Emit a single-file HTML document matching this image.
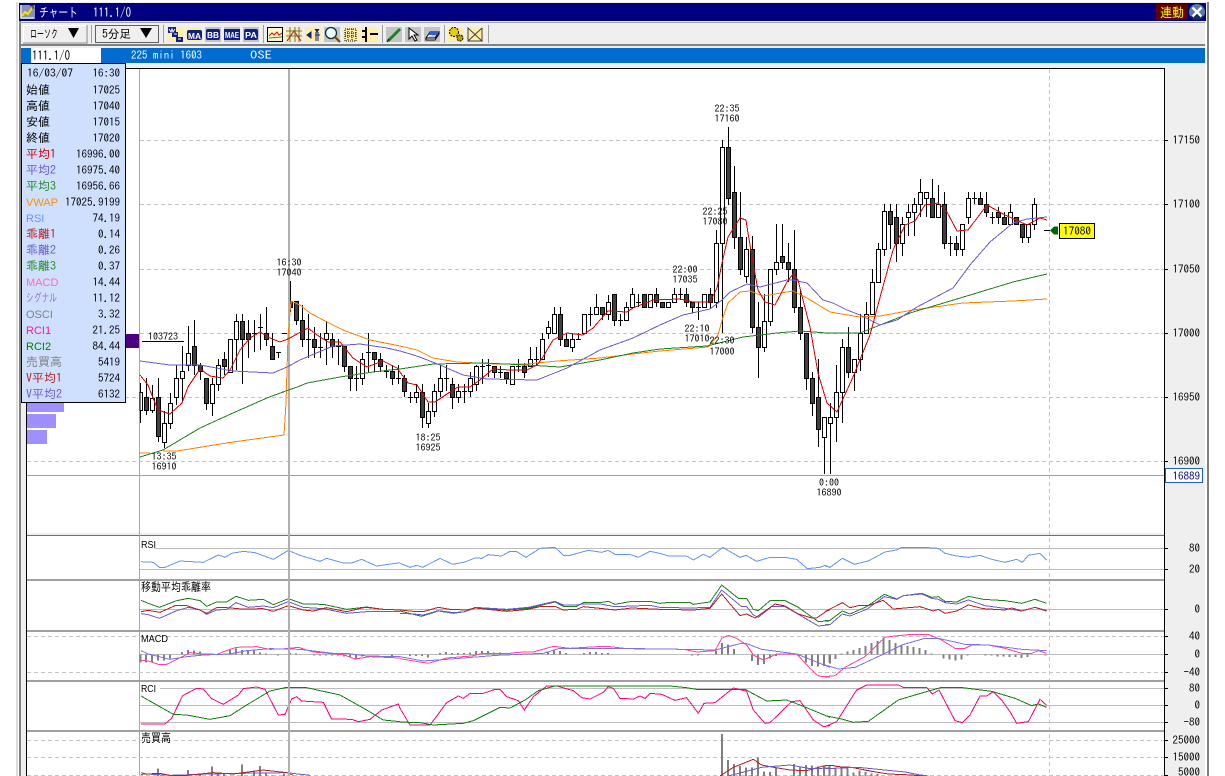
<!DOCTYPE html>
<html lang="ja"><head><meta charset="utf-8"><title>チャート</title>
<style>
html,body{margin:0;padding:0;background:#fff;width:1225px;height:776px;overflow:hidden}
svg{display:block;position:absolute;left:0;top:0}
text{font-family:"IPAGothic","Noto Sans CJK JP",monospace;font-size:11px;fill:#000;white-space:pre}
.j{font-size:12px}
.l{font-family:"Liberation Sans","IPAGothic",sans-serif;font-size:11px}
.e{text-anchor:end}
.m{text-anchor:middle;font-size:10px}
.a{text-anchor:end;font-size:11px}
.z{fill:none;shape-rendering:crispEdges}
</style></head><body>
<svg width="1225" height="776" viewBox="0 0 1225 776" xmlns="http://www.w3.org/2000/svg">
<!-- window chrome -->
<rect x="16" y="0" width="1193" height="776" fill="#efefef"/>
<rect x="0" y="0" width="1225" height="2" fill="#fff"/>
<rect x="16" y="2" width="2" height="774" fill="#ddd"/>
<rect x="18" y="2" width="1" height="774" fill="#fff"/>
<rect x="19" y="21" width="2" height="755" fill="#808080"/>
<rect x="1207" y="2" width="2" height="774" fill="#808080"/>
<rect x="1205" y="21" width="2" height="755" fill="#fff"/>
<rect x="19" y="3" width="1187" height="18" fill="#000080"/>
<!-- title icon -->
<rect x="20" y="5" width="15" height="14" fill="#8890b8"/>
<path d="M21 18h13M21 5v13" stroke="#fff" fill="none"/>
<path d="M22 16l3-4 3 2 4-6" stroke="#ffe000" stroke-width="2" fill="none"/>
<path d="M30 6l3-1v4" stroke="#202020" fill="none"/>
<text x="39" y="17" style="fill:#fff;font-size:13px" textLength="39" lengthAdjust="spacingAndGlyphs">チャート</text>
<text x="93" y="17" style="fill:#fff;font-size:13px" textLength="38" lengthAdjust="spacingAndGlyphs">111.1/O</text>
<rect x="1156" y="4" width="32" height="16" fill="#600000"/>
<text x="1160" y="17" style="fill:#ff0;font-size:13px" textLength="24" lengthAdjust="spacingAndGlyphs">連動</text>
<circle cx="1197" cy="12" r="8" fill="#5a7aa8"/><path d="M1197 12a8 8 0 0 1-7 4 8 8 0 0 0 14 0z" fill="#103060"/>
<path d="M1192.500 7.500l9 9M1201.500 7.500l-9 9" stroke="#fff" stroke-width="2.400"/>
<rect x="19" y="22" width="1186" height="1" fill="#a0a0a0"/>
<rect x="21" y="44" width="1184" height="2" fill="#808080"/>
<!-- combos -->
<rect x="23.500" y="25.500" width="63" height="17" fill="#efefef" stroke="#fff"/>
<path d="M87 25v18H23" stroke="#808080" fill="none"/>
<text class="j" x="30" y="38" textLength="28" lengthAdjust="spacingAndGlyphs">ローソク</text>
<path d="M68 28h11l-5.500 10z"/>
<rect x="91" y="25" width="1" height="18" fill="#a0a0a0"/>
<rect x="95.500" y="25.500" width="63" height="17" fill="#efefef" stroke="#606060"/>
<text class="j" x="102" y="38" textLength="29" lengthAdjust="spacingAndGlyphs">5分足</text>
<path d="M140 28h12l-6 10z"/>
<rect x="163" y="25" width="1" height="18" fill="#a0a0a0"/>
<!-- toolbar icons -->
<rect x="167" y="27" width="16" height="15" fill="#ffeeaa"/>
<rect x="168" y="27" width="8" height="6" fill="#102080"/><rect x="172" y="32" width="6" height="5" fill="#102080"/><rect x="176" y="37" width="7" height="5" fill="#102080"/>
<path d="M169 29l2 3 1-3 1 3 2-3M174 34h3M178 39h3" stroke="#fff" fill="none"/>
<rect x="186" y="27" width="16" height="15" fill="#ffeeaa"/>
<rect x="187" y="30" width="15" height="10" rx="2" fill="#102080"/>
<text x="188" y="39" style="font-size:8px;font-family:'Liberation Sans';fill:#fff;font-weight:bold" textLength="13" lengthAdjust="spacingAndGlyphs">MA</text>
<rect x="205" y="27" width="16" height="15" fill="#c4c4c4"/>
<rect x="206" y="29" width="14" height="11" rx="2" fill="#102080"/>
<text x="207" y="38" style="font-size:8px;font-family:'Liberation Sans';fill:#fff;font-weight:bold" textLength="12" lengthAdjust="spacingAndGlyphs">BB</text>
<rect x="224" y="27" width="16" height="15" fill="#c4c4c4"/>
<rect x="224" y="29" width="16" height="11" fill="#102080"/>
<text x="225" y="38" style="font-size:8px;font-family:'Liberation Sans';fill:#fff;font-weight:bold" textLength="14" lengthAdjust="spacingAndGlyphs">MAE</text>
<rect x="243" y="27" width="16" height="15" fill="#c4c4c4"/>
<rect x="244" y="29" width="14" height="11" rx="2" fill="#102080"/>
<text x="245" y="38" style="font-size:8px;font-family:'Liberation Sans';fill:#fff;font-weight:bold" textLength="12" lengthAdjust="spacingAndGlyphs">PA</text>
<rect x="263" y="25" width="1" height="18" fill="#a0a0a0"/>
<rect x="267.500" y="27.500" width="15" height="14" fill="#fff8d0" stroke="#000"/>
<path d="M269 36l3-3 2 2 3-3 2 3 3-2" stroke="#e00000" fill="none"/><path d="M269 38l13-1" stroke="#20a020" fill="none"/>
<rect x="286" y="27" width="16" height="15" fill="#ffeeaa"/>
<path d="M286 31h16M286 36h16M290 27v15M295 27v15M299 27v15" stroke="#505050" stroke-width=".8" fill="none"/>
<path d="M287 41l7-10 7 10" stroke="#a04030" fill="none" stroke-width="1.200"/>
<rect x="305" y="27" width="16" height="15" fill="#ffeeaa"/>
<path d="M307 35l4-3v6zM315 29l2 3 2-3M315 35h5M316 32v9M318 32v9" fill="#102080" stroke="#102080"/>
<rect x="324" y="27" width="16" height="15" fill="#c4c4c4"/>
<circle cx="331" cy="33" r="5.500" fill="#e8ffff" stroke="#103030" stroke-width="1.300"/><path d="M335 37l5 5" stroke="#804000" stroke-width="2"/>
<rect x="343" y="27" width="16" height="15" fill="#ffeeaa"/>
<path d="M345 29h11v12h-11zM345 33h11M345 36h11M348 29v12M352 29v12" stroke="#000" fill="none" stroke-dasharray="1 1"/>
<rect x="362" y="27" width="16" height="15" fill="#ffeeaa"/>
<path d="M366 27v15M370 34h8M362 31h3M362 37h3" stroke="#000" stroke-width="2" fill="none"/>
<rect x="382" y="25" width="1" height="18" fill="#a0a0a0"/>
<rect x="386" y="27" width="16" height="15" fill="#c4c4c4"/>
<path d="M388 41l12-12" stroke="#208020" stroke-width="3"/><path d="M387 42l2-3" stroke="#000"/>
<rect x="405" y="27" width="16" height="15" fill="#c4c4c4"/>
<path d="M409 28v11l3-3 3 5 2-1-3-5h4z" fill="#fff" stroke="#000"/>
<rect x="424" y="27" width="16" height="15" fill="#c4c4c4"/>
<path d="M426 38l4-6h9l-4 6zM426 38v2h9l4-6v-2" fill="#fff" stroke="#000"/><path d="M430 32h9l-2 3h-9z" fill="#3060d0"/>
<rect x="444" y="25" width="1" height="18" fill="#a0a0a0"/>
<rect x="448" y="27" width="16" height="15" fill="#ffeeaa"/>
<circle cx="454" cy="32" r="4.500" fill="#e8d000" stroke="#000" stroke-dasharray="2 1"/><circle cx="460" cy="38" r="3" fill="#c0a000" stroke="#000" stroke-dasharray="2 1"/>
<rect x="467" y="27" width="16" height="15" fill="#ffeeaa"/>
<path d="M468 28l14 13H468zM482 28v13M482 28l-14 13" stroke="#404040" fill="none"/>
<rect x="488" y="25" width="1" height="18" fill="#a0a0a0"/>
<!-- blue bar -->
<rect x="21" y="48" width="1184" height="15" fill="#006ccf"/>
<rect x="31" y="48" width="70" height="15" fill="#fff"/>
<text x="32" y="60" style="font-size:13px" textLength="38" lengthAdjust="spacingAndGlyphs">111.1/O</text>
<text x="131" y="59" style="fill:#fff;font-size:11px" textLength="71" lengthAdjust="spacingAndGlyphs">225 mini 1603</text>
<text x="250" y="59" style="fill:#fff;font-size:11px" textLength="22" lengthAdjust="spacingAndGlyphs">OSE</text>
<!-- chart bg -->
<rect x="27" y="69" width="1137" height="464" fill="#fff"/>
<rect x="27" y="536" width="1137" height="240" fill="#fff"/>
<path class="z" d="M125 68.500H1164.500V776M26.500 402V776M27 535.500H1165" stroke="#000"/>
<path class="z" d="M27 535.500H1164" stroke="#707070"/>
<path class="z" d="M140 140.500H1164M140 204.500H1164M140 269.500H1164M140 333.500H1164M27 397.500H1164M27 461.500H1164M1049.500 69V776" stroke="#c4c4c4" stroke-dasharray="4 3"/>
<path class="z" d="M27 475.500H1164" stroke="#a0a0a0"/>
<path class="z" d="M1165 140.500h3M1165 204.500h3M1165 269.500h3M1165 333.500h3M1165 397.500h3M1165 461.500h3" stroke="#000"/>
<path class="z" d="M139.500 69V776" stroke="#a8a8a8"/>
<!-- volume profile -->
<rect x="27" y="403" width="37" height="9" fill="#9f8fff"/><rect x="27" y="414" width="29" height="14" fill="#9f8fff"/><rect x="27" y="430" width="20" height="14" fill="#9f8fff"/>
<rect x="126" y="334" width="13" height="14" fill="#4b0082"/>
<text x="148" y="340" style="font-size:10px">103723</text>
<path class="z" d="M142 341.500h42" stroke="#000"/>
<!-- candles: wicks -->
<path class="z" stroke="#000" d="M146.500 378V415M152.500 385V413M158.500 378V442M164.500 411V448M170.500 393V429M176.500 365V405M182.500 346V402M188.500 326V371M194.500 320V375M200.500 363V380M206.500 378V410M212.500 378V416M218.500 359V391M224.500 352V375M230.500 339V371M236.500 314V370M242.500 314V384M248.500 320V358M254.500 320V352M260.500 314V350M266.500 307V346M272.500 333V359M278.500 352V358M290.500 281V312M296.500 301V325M302.500 305V347M308.500 314V358M314.500 327V358M320.500 333V358M326.500 321V365M332.500 333V358M338.500 339V365M344.500 346V372M350.500 366V391M356.500 366V391M362.500 353V385M368.500 333V372M374.500 352V372M380.500 353V372M386.500 365V378M392.500 365V385M398.500 365V384M404.500 375V397M410.500 392V403M416.500 384V403M422.500 384V428M428.500 403V428M434.500 384V417M440.500 365V397M446.500 365V391M452.500 378V409M458.500 384V403M464.500 384V403M470.500 372V397M476.500 365V391M482.500 359V384M488.500 359V377M494.500 366V378M500.500 366V378M506.500 372V384M518.500 359V372M524.500 363V378M530.500 347V366M536.500 347V366M542.500 333V359M548.500 321V339M554.500 307V333M560.500 307V346M566.500 333V346M572.500 333V352M578.500 333V339M590.500 307V326M596.500 294V314M602.500 307V320M608.500 295V320M614.500 294V326M620.500 314V326M626.500 302V320M632.500 288V307M638.500 294V307M656.500 288V307M674.500 288V302M680.500 288V300M686.500 288V307M692.500 302V313M698.500 302V320M710.500 288V308M716.500 230V308M722.500 140V333M728.500 127V205M734.500 166V249M740.500 192V275M746.500 237V283M752.500 236V333M758.500 302V378M764.500 294V352M770.500 269V326M776.500 224V275M782.500 224V269M788.500 243V282M794.500 230V313M800.500 290V340M806.500 333V390M812.500 372V416M818.500 359V447M824.500 417V474M830.500 403V474M836.500 365V442M842.500 339V423M848.500 327V378M854.500 359V391M860.500 314V371M866.500 302V333M872.500 269V314M878.500 243V282M884.500 204V256M890.500 204V249M896.500 204V262M902.500 217V256M908.500 204V236M914.500 198V236M920.500 179V217M926.500 192V217M932.500 179V217M938.500 185V217M944.500 192V249M950.500 236V256M956.500 236V256M962.500 224V256M968.500 192V224M974.500 192V204M980.500 192V204M986.500 192V217M992.500 212V224M998.500 207V224M1004.500 212V224M1010.500 204V224M1022.500 224V243M1028.500 224V243M1034.500 198V230M140.500 383V423
M252 333.500h5M258 327.500h5M276 352.500h5M282 333.500h5M306 339.500h5M318 347.500h5M336 346.500h5M354 378.500h5M366 352.500h5M384 371.500h5M396 378.500h5M408 397.500h5M444 378.500h5M462 391.500h5M480 366.500h5M486 365.500h5M498 372.500h5M516 366.500h5M534 359.500h5M576 339.500h5M588 314.500h5M618 320.500h5M636 302.500h5M678 294.500h5M696 307.500h5M948 243.500h5M972 198.500h5M990 217.500h5"/>
<!-- white bodies -->
<path class="z" style="fill:#fff" stroke="#000" d="M140 392.500h2.500V410.500H140zM150.500 398.500h4V410.500h-4zM162.500 423.500h4V442.500h-4zM168.500 403.500h4V423.500h-4zM174.500 378.500h4V397.500h-4zM180.500 371.500h4V378.500h-4zM186.500 353.500h4V365.500h-4zM210.500 384.500h4V403.500h-4zM216.500 365.500h4V384.500h-4zM228.500 339.500h4V372.500h-4zM234.500 321.500h4V339.500h-4zM324.500 333.500h4V339.500h-4zM360.500 359.500h4V378.500h-4zM414.500 392.500h4V397.500h-4zM426.500 411.500h4V423.500h-4zM432.500 391.500h4V411.500h-4zM438.500 378.500h4V391.500h-4zM456.500 391.500h4V397.500h-4zM468.500 378.500h4V391.500h-4zM474.500 366.500h4V384.500h-4zM510.500 366.500h4V384.500h-4zM528.500 359.500h4V366.500h-4zM540.500 339.500h4V359.500h-4zM546.500 327.500h4V333.500h-4zM552.500 314.500h4V333.500h-4zM570.500 339.500h4V347.500h-4zM582.500 314.500h4V333.500h-4zM594.500 307.500h4V314.500h-4zM606.500 302.500h4V314.500h-4zM624.500 307.500h4V320.500h-4zM630.500 294.500h4V307.500h-4zM648.500 294.500h4V307.500h-4zM666.500 302.500h4V307.500h-4zM672.500 294.500h4V302.500h-4zM702.500 294.500h4V307.500h-4zM714.500 243.500h4V302.500h-4zM720.500 147.500h4V243.500h-4zM744.500 249.500h4V276.500h-4zM762.500 321.500h4V347.500h-4zM768.500 269.500h4V321.500h-4zM774.500 262.500h4V269.500h-4zM822.500 417.500h4V437.500h-4zM828.500 417.500h4V423.500h-4zM834.500 392.500h4V417.500h-4zM840.500 347.500h4V392.500h-4zM852.500 359.500h4V372.500h-4zM858.500 333.500h4V359.500h-4zM864.500 314.500h4V333.500h-4zM870.500 282.500h4V314.500h-4zM876.500 249.500h4V282.500h-4zM882.500 211.500h4V249.500h-4zM900.500 224.500h4V243.500h-4zM906.500 212.500h4V217.500h-4zM912.500 204.500h4V212.500h-4zM918.500 192.500h4V204.500h-4zM924.500 192.500h4V198.500h-4zM936.500 204.500h4V217.500h-4zM960.500 224.500h4V249.500h-4zM966.500 198.500h4V217.500h-4zM1008.500 212.500h4V224.500h-4zM1026.500 224.500h4V237.500h-4zM1032.500 204.500h4V224.500h-4z"/>
<!-- dark bodies -->
<path class="z" style="fill:#404040" stroke="#000" d="M144.500 397.500h4V410.500h-4zM156.500 397.500h4V436.500h-4zM192.500 346.500h4V365.500h-4zM198.500 365.500h4V371.500h-4zM204.500 378.500h4V403.500h-4zM222.500 359.500h4V366.500h-4zM240.500 321.500h4V339.500h-4zM246.500 333.500h4V339.500h-4zM264.500 333.500h4V339.500h-4zM270.500 346.500h4V359.500h-4zM288.500 301.500h4V307.500h-4zM294.500 301.500h4V320.500h-4zM300.500 320.500h4V339.500h-4zM312.500 339.500h4V347.500h-4zM330.500 339.500h4V346.500h-4zM342.500 346.500h4V366.500h-4zM348.500 366.500h4V378.500h-4zM372.500 352.500h4V359.500h-4zM378.500 359.500h4V366.500h-4zM390.500 371.500h4V378.500h-4zM402.500 378.500h4V391.500h-4zM420.500 392.500h4V417.500h-4zM450.500 384.500h4V397.500h-4zM492.500 366.500h4V372.500h-4zM504.500 372.500h4V378.500h-4zM522.500 366.500h4V372.500h-4zM558.500 314.500h4V339.500h-4zM564.500 339.500h4V346.500h-4zM600.500 307.500h4V314.500h-4zM612.500 294.500h4V320.500h-4zM642.500 294.500h4V307.500h-4zM654.500 294.500h4V302.500h-4zM660.500 302.500h4V307.500h-4zM684.500 294.500h4V302.500h-4zM690.500 302.500h4V307.500h-4zM708.500 294.500h4V302.500h-4zM726.500 147.500h4V198.500h-4zM732.500 192.500h4V237.500h-4zM738.500 237.500h4V269.500h-4zM750.500 249.500h4V327.500h-4zM756.500 327.500h4V347.500h-4zM780.500 256.500h4V262.500h-4zM786.500 262.500h4V269.500h-4zM792.500 269.500h4V307.500h-4zM798.500 307.500h4V333.500h-4zM804.500 333.500h4V378.500h-4zM810.500 378.500h4V403.500h-4zM816.500 397.500h4V429.500h-4zM846.500 347.500h4V372.500h-4zM888.500 211.500h4V224.500h-4zM894.500 217.500h4V243.500h-4zM930.500 198.500h4V217.500h-4zM942.500 204.500h4V243.500h-4zM954.500 243.500h4V249.500h-4zM978.500 198.500h4V204.500h-4zM984.500 204.500h4V212.500h-4zM996.500 212.500h4V217.500h-4zM1002.500 217.500h4V224.500h-4zM1014.500 217.500h4V224.500h-4zM1020.500 224.500h4V237.500h-4z"/>
<!-- crosshair -->
<path class="z" stroke="#b0b0b0" stroke-width="2" d="M289 69V776"/>
<path class="z" stroke="#90ee90" d="M288.500 321V333"/>
<!-- moving averages -->
<polyline class="z" stroke="#ff8000" points="140,453 150,453"/>
<polyline class="z" stroke="#ff8000" points="163,451 177,451 233,442 284,435 286,403 288,337 291,301 300,305 310,313 327,322 343,330 370,340 400,346 417,350 433,358 457,362 497,364 527,364 557,361 600,358 633,354 660,351 708,347 718,335 723,317 728,303 740,292 750,291 763,296 793,291 807,298 830,312 860,317 880,316 913,310 963,303 1013,301 1047,299"/>
<polyline class="z" stroke="#208020" points="140,457 163,450 200,428 233,413 267,398 283,392 300,386 307,383 340,377 373,372 400,369 433,364 483,363 527,365 560,367 600,360 633,353 660,349 707,346 743,337 777,333 800,331 827,333 860,333 880,325 913,312 947,302 980,292 1013,282 1047,274"/>
<polyline class="z" stroke="#6a5acd" points="140,361 170,365 200,365 233,371 273,373 287,367 300,360 307,357 333,346 360,344 387,348 400,351 417,356 440,365 463,375 487,379 537,380 567,368 600,350 633,338 660,325 683,315 710,309 722,300 730,292 747,284 760,287 787,280 793,280 807,283 823,300 833,303 847,310 860,315 880,325 897,320 917,307 953,288 970,265 990,242 1013,223 1027,219 1047,217"/>
<polyline class="z" stroke="#d80000" points="140,375 148,385 153,398 158,410 170,414 182,403 188,387 200,369 210,376 223,378 230,370 240,350 250,338 260,332 270,338 280,342 288,339 308,328 317,335 328,342 340,342 353,358 367,367 383,361 397,368 408,383 417,385 428,402 435,402 450,392 458,387 470,387 480,380 493,369 510,370 527,370 537,365 543,357 553,340 567,333 583,335 593,328 608,311 627,312 633,308 653,300 680,299 693,302 710,302 717,288 722,263 728,237 740,218 746,220 748,233 753,263 758,290 765,302 775,305 787,282 793,274 798,280 803,300 810,327 818,373 827,403 837,412 853,377 870,335 882,290 893,250 905,225 915,221 925,205 938,203 947,212 957,231 968,230 987,205 1005,215 1027,225 1040,218 1047,220"/>
<!-- sub panels grid -->
<path class="z" stroke="#bcbcbc" d="M155 548.500H1164M140 569.500H1164M140 609.500H1164M140 654.500H1164M160 688.500H1164M140 705.500H1164M140 722.500H1164"/>
<path class="z" stroke="#c4c4c4" stroke-dasharray="4 3" d="M27 636.500H1164M27 672.500H1164M27 740.500H1164M27 757.500H1164M27 775.500H1164"/>
<path class="z" stroke="#000" d="M1165 548.500h3M1165 569.500h3M1165 609.500h3M1165 636.500h3M1165 654.500h3M1165 672.500h3M1165 688.500h3M1165 705.500h3M1165 722.500h3M1165 740.500h3M1165 757.500h3M1165 775.500h3"/>
<rect x="27" y="579" width="1137" height="2" fill="#a0a0a0"/>
<rect x="27" y="630" width="1137" height="2" fill="#a0a0a0"/>
<rect x="27" y="680" width="1137" height="2" fill="#a0a0a0"/>
<rect x="27" y="730" width="1137" height="2" fill="#a0a0a0"/>
<!-- sub panels left part -->
<g transform="translate(0,530) scale(.33333)" fill="none" stroke-width="3" shape-rendering="crispEdges">
<polyline stroke="#6495ed" points="423,95 460,97 478,112 495,112 540,93 610,97 655,75 675,82 695,70 730,64 765,68 820,88 865,61 900,76 960,94 980,85 1030,99 1055,99 1085,88 1130,108 1200,98"/>
<polyline stroke="#208020" points="423,211 445,220 478,232 530,212 565,205 600,212 620,229 650,216 680,216 708,199 745,211 790,208 820,224 865,206 910,222 970,223 1040,238 1100,231 1150,238 1200,240"/>
<polyline stroke="#6a5acd" points="423,251 445,254 478,265 530,242 565,232 600,240 620,253 650,240 680,238 708,218 745,232 790,228 820,233 865,215 910,232 970,236 1040,250 1100,245 1200,245"/>
<polyline stroke="#b22222" points="423,245 445,241 480,247 525,227 560,227 600,240 620,250 650,233 680,233 725,237 790,236 820,244 865,227 910,240 940,243 980,233 1040,245 1095,232 1150,238 1200,240"/>
<path stroke="#808080" stroke-width="6" d="M421 373V398M438 373V398M456 373V396M474 373V392M492 373V392M510 373V385M546 373V366M564 373V360M582 373V362M600 373V364M690 373V360M708 373V356M726 373V360M744 373V360M762 373V362M780 373V368M798 373V370M834 373V377M870 373V369M888 373V370M942 373V377M960 373V377M978 373V377M996 373V377M1014 373V377M1032 373V379M1050 373V381M1068 373V388M1086 373V380M1176 373V378"/>
<polyline stroke="#ff40a0" points="423,391 445,393 475,403 500,403 525,391 570,368 610,372 650,373 690,358 710,352 770,350 810,358 860,356 895,352 940,366 1030,374 1065,387 1110,380 1200,384"/>
<polyline stroke="#8070e8" points="423,362 445,372 510,388 560,380 610,375 690,372 740,362 810,356 900,358 1000,370 1040,370 1100,378 1200,380"/>
<polyline stroke="#ff0080" points="423,582 495,582 515,565 548,497 590,475 610,477 635,506 670,523 715,495 730,476 770,471 795,478 835,555 855,553 875,507 890,500 905,513 970,517 995,567 1055,568 1075,575 1110,568 1145,540 1195,522 1200,535"/>
<polyline stroke="#108010" points="423,498 520,553 560,555 630,568 690,557 740,525 810,483 860,472 920,473 1020,495 1100,540 1150,570 1200,575"/>
<path stroke="#808080" stroke-width="6" d="M474 738V716M564 738V720M600 738V730M636 738V710M654 738V728M672 738V730M726 738V704M762 738V722M780 738V708M798 738V730M816 738V736M852 738V730"/>
<polyline stroke="#6a5acd" points="423,728 440,732 510,736 630,732 720,730 860,728 930,736"/>
<polyline stroke="#b22222" points="423,733 480,730 510,736 560,736 640,728 700,732 790,720 860,728 880,736"/>
</g>
<!-- middle -->
<g transform="translate(400,530) scale(.33333)" fill="none" stroke-width="3" shape-rendering="crispEdges">
<polyline stroke="#6495ed" points="0,100 30,112 50,106 68,112 120,85 158,103 195,96 225,84 245,85 265,74 305,78 330,64 350,65 378,82 420,55 465,52 490,76 510,76 565,61 605,67 625,61 645,73 690,73 715,82 750,64 780,70 805,78 860,78 880,90 910,73 930,82 968,52 1020,82 1038,76 1070,94 1110,82 1155,82 1190,88 1222,116 1260,112 1275,106 1290,112"/>
<polyline stroke="#208020" points="0,243 65,259 115,243 160,250 195,245 225,234 320,240 385,235 465,216 490,229 530,229 550,218 600,218 625,214 645,223 695,214 750,214 780,220 810,217 870,218 880,223 930,216 965,165 1015,205 1040,205 1060,238 1075,242 1110,212 1155,212 1195,232 1255,275 1290,272"/>
<polyline stroke="#6a5acd" points="0,250 40,252 70,255 115,242 160,248 195,245 225,232 320,238 385,232 465,214 490,225 530,225 550,222 600,222 645,230 750,226 780,232 870,234 930,232 965,180 1025,230 1040,230 1060,255 1075,262 1115,230 1155,230 1190,250 1255,288 1290,284"/>
<polyline stroke="#b22222" points="0,240 40,244 70,245 115,232 150,238 200,240 225,234 320,244 385,238 420,230 465,229 490,240 530,238 550,230 600,235 645,240 695,234 780,238 880,240 930,235 965,192 1020,257 1040,252 1065,264 1125,222 1155,228 1195,252 1235,264 1250,264 1280,243 1290,240"/>
<path stroke="#808080" stroke-width="6" d="M30 373V378M48 373V378M66 373V378M84 373V382M120 373V369M138 373V366M156 373V369M174 373V369M192 373V369M210 373V367M228 373V363M246 373V363M264 373V363M282 373V367M300 373V367M444 373V365M462 373V361M480 373V363M498 373V369M552 373V369M570 373V366M588 373V366M606 373V369M624 373V369M876 373V377M894 373V377M948 373V361M966 373V339M984 373V343M1002 373V357M1056 373V393M1074 373V405M1092 373V402M1110 373V385M1128 373V378M1200 373V378M1218 373V398M1236 373V408M1254 373V410M1272 373V408M1290 373V400"/>
<polyline stroke="#ff40a0" points="0,386 30,391 85,400 140,384 215,378 250,370 330,370 350,367 400,366 460,349 510,355 590,350 630,350 680,356 850,358 890,366 945,362 965,325 985,316 1010,325 1040,345 1060,375 1090,390 1130,372 1190,372 1230,415 1255,438 1290,442"/>
<polyline stroke="#8070e8" points="0,380 70,393 140,388 290,376 430,370 475,356 650,355 850,358 945,360 1020,341 1040,341 1085,358 1190,372 1290,412"/>
<polyline stroke="#ff0080" points="0,535 30,585 90,585 140,518 175,498 190,505 210,490 250,490 285,478 300,478 320,500 355,512 373,540 400,500 440,468 470,468 520,482 545,503 570,507 610,487 625,470 640,475 660,505 700,507 720,498 735,505 750,490 785,493 825,511 860,503 895,550 912,520 945,518 1000,474 1040,484 1060,540 1095,580 1110,578 1175,515 1200,512 1240,570 1270,590 1290,587"/>
<polyline stroke="#108010" points="0,576 60,578 100,585 190,580 220,572 300,532 330,534 375,510 415,482 465,468 810,468 860,473 890,478 1035,478 1100,513 1160,510 1200,525 1290,562"/>
<path stroke="#808080" stroke-width="6" d="M966 738V612M984 738V690M1002 738V702M1020 738V708M1038 738V712M1056 738V712M1074 738V682M1092 738V724M1110 738V726M1128 738V712M1182 738V702M1200 738V710M1218 738V705M1236 738V706M1254 738V710M1272 738V710"/>
<polyline stroke="#b22222" points="960,738 1000,712 1060,688 1085,705 1110,710 1170,720 1220,722 1270,708 1290,706"/>
<polyline stroke="#6a5acd" points="985,738 1085,712 1170,705 1230,716 1290,714"/>
</g>
<!-- right -->
<g transform="translate(825,530) scale(.33333)" fill="none" stroke-width="3" shape-rendering="crispEdges">
<polyline stroke="#6495ed" points="0,108 15,112 52,85 88,103 130,93 180,66 215,60 230,52 295,52 340,55 360,70 395,78 430,82 465,76 500,88 540,97 575,88 592,97 610,76 645,70 665,90"/>
<polyline stroke="#208020" points="0,271 15,271 52,243 75,252 125,230 178,193 215,207 235,197 290,190 320,202 340,200 360,214 395,216 430,199 475,208 540,212 590,220 630,208 665,220"/>
<polyline stroke="#6a5acd" points="0,284 15,284 52,252 75,258 125,238 178,200 215,208 235,197 290,192 320,205 340,208 360,218 395,222 430,210 480,227 540,235 590,243 630,232 665,244"/>
<polyline stroke="#b22222" points="0,245 52,218 75,233 100,227 130,227 175,211 205,237 285,230 325,243 340,238 360,250 395,243 430,225 475,236 540,240 560,234 590,243 630,232 665,242"/>
<path stroke="#808080" stroke-width="6" d="M14 373V398M32 373V387M50 373V370M68 373V365M86 373V360M104 373V354M122 373V348M140 373V339M158 373V333M176 373V322M194 373V330M212 373V339M230 373V345M248 373V348M266 373V351M284 373V354M302 373V360M320 373V370M356 373V385M374 373V388M392 373V392M410 373V388M428 373V377M482 373V376M500 373V377M518 373V380M536 373V380M554 373V381M572 373V381M590 373V384M608 373V381M662 373V376"/>
<polyline stroke="#ff40a0" points="0,440 30,437 60,412 120,380 180,322 210,318 260,313 310,313 350,330 390,355 420,355 440,345 490,345 540,355 590,370 620,370 640,362 665,370"/>
<polyline stroke="#8070e8" points="0,405 40,417 90,412 170,375 230,345 300,325 340,325 420,343 490,345 590,358 665,362"/>
<polyline stroke="#ff0080" points="0,590 35,575 60,535 95,480 125,465 220,465 235,472 305,472 322,492 342,480 390,572 412,578 435,555 465,498 485,498 505,485 530,510 555,545 575,580 610,575 645,508 665,526"/>
<polyline stroke="#108010" points="0,557 50,567 85,577 130,574 220,510 280,492 350,472 405,472 500,484 570,505 620,527 640,522 665,532"/>
<path stroke="#808080" stroke-width="6" d="M14 738V708M32 738V712M50 738V714M68 738V716M86 738V727M104 738V722M122 738V726M140 738V730M158 738V732"/>
<polyline stroke="#b22222" points="0,706 20,706 40,710 80,712 140,724 190,732 240,734 300,738"/>
<polyline stroke="#6a5acd" points="0,716 100,712 180,720 240,726 280,734 310,738"/>
</g>
<!-- crosshair over sub panels -->
<path class="z" stroke="#b0b0b0" stroke-width="2" d="M289 536V776"/>
<!-- sub labels -->
<text class="l" x="141" y="548" style="font-size:10px" textLength="15" lengthAdjust="spacingAndGlyphs">RSI</text>
<text class="j" x="141" y="591" textLength="70" lengthAdjust="spacingAndGlyphs">移動平均乖離率</text>
<text class="l" x="141" y="642" style="font-size:10px" textLength="27" lengthAdjust="spacingAndGlyphs">MACD</text>
<text class="l" x="141" y="692" style="font-size:10px" textLength="15" lengthAdjust="spacingAndGlyphs">RCI</text>
<text class="j" x="141" y="742" textLength="30" lengthAdjust="spacingAndGlyphs">売買高</text>
<!-- price labels -->
<text class="m" x="727" y="112">22:35</text><text class="m" x="727" y="122">17160</text>
<text class="m" x="715" y="215">22:25</text><text class="m" x="715" y="225">17080</text>
<text class="m" x="685" y="273">22:00</text><text class="m" x="685" y="283">17035</text>
<text class="m" x="697" y="332">22:10</text><text class="m" x="697" y="342">17010</text>
<text class="m" x="722" y="344">22:30</text><text class="m" x="722" y="355">17000</text>
<text class="m" x="829" y="486">0:00</text><text class="m" x="829" y="496">16890</text>
<text class="m" x="289" y="266">16:30</text><text class="m" x="289" y="276">17040</text>
<text class="m" x="428" y="441">18:25</text><text class="m" x="428" y="451">16925</text>
<text class="m" x="164" y="460">13:35</text><text class="m" x="164" y="470">16910</text>
<!-- axis -->
<text class="a" x="1200" y="144">17150</text><text class="a" x="1200" y="208">17100</text><text class="a" x="1200" y="273">17050</text><text class="a" x="1200" y="337">17000</text><text class="a" x="1200" y="401">16950</text><text class="a" x="1200" y="465">16900</text>
<rect x="1165.500" y="468.500" width="37" height="14" fill="#fff" stroke="#2060c0"/>
<text class="a" x="1200" y="480" style="fill:#000080">16889</text>
<text class="a" x="1200" y="552">80</text><text class="a" x="1200" y="573">20</text><text class="a" x="1200" y="613">0</text>
<text class="a" x="1200" y="640">40</text><text class="a" x="1200" y="658">0</text><text class="a" x="1200" y="676">-40</text>
<text class="a" x="1200" y="692">80</text><text class="a" x="1200" y="709">0</text><text class="a" x="1200" y="726">-80</text>
<text class="a" x="1200" y="744">25000</text><text class="a" x="1200" y="761">15000</text><text class="a" x="1200" y="776">5000</text>
<!-- current price tag -->
<path class="z" stroke="#000" d="M1044 230.500h6"/>
<path d="M1050 230.500l4-4h4v8h-4z" fill="#006400"/>
<rect x="1059.500" y="223.500" width="35" height="15" fill="#ff0" stroke="#000"/>
<text x="1063" y="235" style="font-size:11px" textLength="28" lengthAdjust="spacingAndGlyphs">17080</text>
<!-- info panel -->
<rect x="21.500" y="63.500" width="104" height="339" fill="#cfe0ff" stroke="#000"/>
<text x="27" y="77" style="font-size:11px" textLength="46" lengthAdjust="spacingAndGlyphs">16/03/07</text>
<text class="e" x="120" y="77" style="font-size:11px">16:30</text>
<text class="j" x="26" y="94">始値</text><text class="e" x="120" y="94">17025</text>
<text class="j" x="26" y="110">高値</text><text class="e" x="120" y="110">17040</text>
<text class="j" x="26" y="126">安値</text><text class="e" x="120" y="126">17015</text>
<text class="j" x="26" y="142">終値</text><text class="e" x="120" y="142">17020</text>
<text class="j" x="26" y="158" style="fill:#d00000">平均1</text><text class="e" x="120" y="158">16996.00</text>
<text class="j" x="26" y="174" style="fill:#6a5acd">平均2</text><text class="e" x="120" y="174">16975.40</text>
<text class="j" x="26" y="190" style="fill:#228b22">平均3</text><text class="e" x="120" y="190">16956.66</text>
<text class="l" x="26" y="206" style="fill:#ff8c00">VWAP</text><text class="e" x="120" y="206">17025.9199</text>
<text class="l" x="26" y="222" style="fill:#6495ed">RSI</text><text class="e" x="120" y="222">74.19</text>
<text class="j" x="26" y="238" style="fill:#b22222">乖離1</text><text class="e" x="120" y="238">0.14</text>
<text class="j" x="26" y="254" style="fill:#6a5acd">乖離2</text><text class="e" x="120" y="254">0.26</text>
<text class="j" x="26" y="270" style="fill:#228b22">乖離3</text><text class="e" x="120" y="270">0.37</text>
<text class="l" x="26" y="286" style="fill:#ff69b4">MACD</text><text class="e" x="120" y="286">14.44</text>
<text class="j" x="26" y="302" style="fill:#9370db" textLength="31" lengthAdjust="spacingAndGlyphs">シグナル</text><text class="e" x="120" y="302">11.12</text>
<text class="l" x="26" y="318" style="fill:#808080">OSCI</text><text class="e" x="120" y="318">3.32</text>
<text class="l" x="26" y="334" style="fill:#ff1493">RCI1</text><text class="e" x="120" y="334">21.25</text>
<text class="l" x="26" y="350" style="fill:#008000">RCI2</text><text class="e" x="120" y="350">84.44</text>
<text class="j" x="26" y="366" style="fill:#808080">売買高</text><text class="e" x="120" y="366">5419</text>
<text class="j" x="26" y="382" style="fill:#b22222">V平均1</text><text class="e" x="120" y="382">5724</text>
<text class="j" x="26" y="398" style="fill:#6a5acd">V平均2</text><text class="e" x="120" y="398">6132</text>
</svg>
</body></html>
